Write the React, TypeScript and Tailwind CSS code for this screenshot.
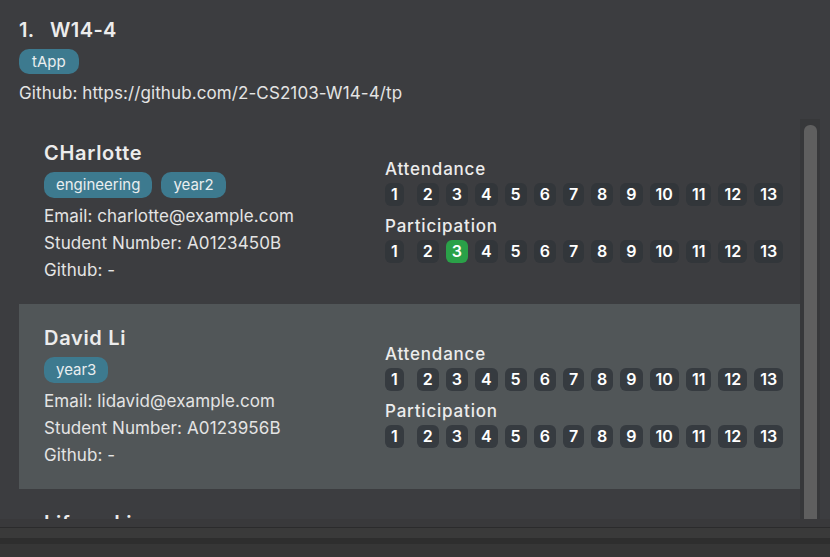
import React from "react";

type Student = {
  name: string;
  tags: string[];
  email: string;
  studentNumber: string;
  github: string;
  participation: number[];
  selected?: boolean;
};

const WEEKS = [1, 2, 3, 4, 5, 6, 7, 8, 9, 10, 11, 12, 13];

const students: Student[] = [
  {
    name: "CHarlotte",
    tags: ["engineering", "year2"],
    email: "charlotte@example.com",
    studentNumber: "A0123450B",
    github: "-",
    participation: [3],
  },
  {
    name: "David Li",
    tags: ["year3"],
    email: "lidavid@example.com",
    studentNumber: "A0123956B",
    github: "-",
    participation: [],
    selected: true,
  },
];

const Tag = ({ label }: { label: string }) => (
  <span className="h-[26px] rounded-[10px] bg-[#3d7a8f] px-[12px] text-[15px] leading-[26px] text-[#e9eef0]">
    {label}
  </span>
);

const WeekRow = ({
  marked,
  selected,
}: {
  marked: number[];
  selected?: boolean;
}) => (
  <div className="mt-[4px] flex gap-[7px]">
    {WEEKS.map((w) => (
      <span
        key={w}
        className={
          "h-[23px] min-w-[18px] rounded-[6px] px-[6px] text-center text-[16px] font-semibold leading-[23px] text-white " +
          (w === 1 ? "mr-[6px] " : "") +
          (marked.includes(w)
            ? "bg-[#2aa148]"
            : selected
              ? "bg-[#363b40]"
              : "bg-[#32363a]")
        }
      >
        {w}
      </span>
    ))}
  </div>
);

const StudentCard = ({ student }: { student: Student }) => (
  <div
    className={
      "flex h-[185px] shrink-0 pl-[25px] " +
      (student.selected ? "bg-[#515658]" : "")
    }
  >
    <div className="w-[341px] pt-[20px]">
      <div className="text-[20px] font-semibold leading-[28px] tracking-[0.7px] text-[#ececec]">
        {student.name}
      </div>
      <div className="mt-[5px] flex gap-[9px]">
        {student.tags.map((t) => (
          <Tag key={t} label={t} />
        ))}
      </div>
      <div className="mt-[5px] text-[17px] leading-[27px] tracking-[0.1px] text-[#e4e4e4]">
        <div>Email: {student.email}</div>
        <div>Student Number: {student.studentNumber}</div>
        <div>Github: {student.github}</div>
      </div>
    </div>
    <div className="flex-1 pt-[40px]">
      <div className="text-[17px] font-medium leading-[20px] tracking-[0.8px] text-[#ececec]">
        Attendance
      </div>
      <WeekRow marked={[]} selected={student.selected} />
      <div className="mt-[10px] text-[17px] font-medium leading-[20px] tracking-[0.8px] text-[#ececec]">
        Participation
      </div>
      <WeekRow marked={student.participation} selected={student.selected} />
    </div>
  </div>
);

export default function App() {
  return (
    <div
      className="flex h-[557px] w-[830px] flex-col overflow-hidden bg-[#3c3d40]"
      style={{ fontFamily: "Inter, 'Noto Sans', sans-serif" }}
    >
      <div className="flex h-[519px] shrink-0 flex-col overflow-hidden">
        <div className="px-[19px] pt-[16px]">
          <div className="flex text-[20px] font-semibold leading-[28px] tracking-[0.4px] text-[#ececec]">
            <span className="w-[31px]">1.</span>
            <span>W14-4</span>
          </div>
          <div className="mt-[5px] flex">
            <span className="h-[25px] rounded-[10px] bg-[#3d7a8f] px-[13px] text-[15px] leading-[25px] text-[#e9eef0]">
              tApp
            </span>
          </div>
          <div className="mt-[7px] text-[17px] leading-[24px] tracking-[0.1px] text-[#e4e4e4]">
            Github: https://github.com/2-CS2103-W14-4/tp
          </div>
        </div>
        <div className="mt-[14px] flex min-h-0 flex-1">
          <div className="ml-[19px] flex w-[781px] flex-col overflow-hidden">
            {students.map((s) => (
              <StudentCard key={s.name} student={s} />
            ))}
            <div className="shrink-0 pl-[25px] pt-[20px] text-[20px] font-semibold leading-[28px] tracking-[0.7px] text-[#ececec]">
              Lifeng Li
            </div>
          </div>
          <div className="w-[20px] bg-[#37383a] px-[4px] pt-[6px]">
            <div className="h-full w-[13px] rounded-t-[6px] bg-[#5f5f5f]" />
          </div>
        </div>
      </div>
      <div className="h-[8px] bg-[#39393b]" />
      <div className="h-[1px] bg-[#2b2b2c]" />
      <div className="h-[10px] bg-[#3a3a3a]" />
      <div className="h-[6px] bg-[#2e2e2e]" />
      <div className="flex-1 bg-[#363636]" />
    </div>
  );
}
